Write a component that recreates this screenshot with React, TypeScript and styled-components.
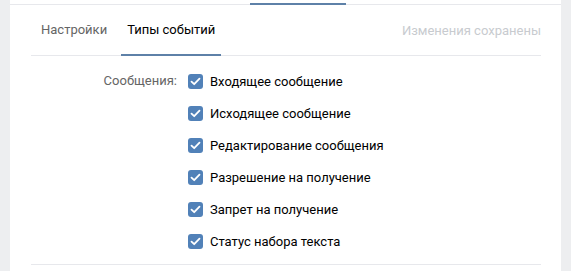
import React from 'react'
import styled, { createGlobalStyle } from 'styled-components'

const Global = createGlobalStyle`
body {
  margin: 0;
  background: #edeef0;
  font-family: Roboto, "Open Sans", sans-serif;
  -webkit-font-smoothing: antialiased;
}
`

const events = [
  'Входящее сообщение',
  'Исходящее сообщение',
  'Редактирование сообщения',
  'Разрешение на получение',
  'Запрет на получение',
  'Статус набора текста',
]

const App = () => {
  return (
    <Page>
      <Global />
      <TopStrip>
        <TopIndicator />
      </TopStrip>
      <Panel>
        <Tabs>
          <Tab>Настройки</Tab>
          <Tab active>Типы событий</Tab>
          <Saved>Изменения сохранены</Saved>
        </Tabs>
        <Form>
          <Label>Сообщения:</Label>
          <List>
            {events.map((e) => (
              <Row key={e}>
                <Box>
                  <svg width="11" height="9" viewBox="0 0 11 9">
                    <path d="M1.5 4.6 L4.2 7.2 L9.5 1.6" fill="none" stroke="#fff" strokeWidth="1.8" strokeLinecap="round" strokeLinejoin="round" />
                  </svg>
                </Box>
                <Text>{e}</Text>
              </Row>
            ))}
          </List>
        </Form>
      </Panel>
    </Page>
  )
}

export default App

const Page = styled.div`
width: 551px;
margin-left: 10px;
`

const TopStrip = styled.div`
height: 4px;
display: flex;
background: #fff;
border-bottom: 1px solid #e7e8ec;
`

const TopIndicator = styled.div`
margin-left: 240px;
width: 96px;
height: 2px;
align-self: flex-end;
margin-bottom: -1px;
background: #5e81a8;
`

const Panel = styled.div`
background: #fff;
padding: 0 20px 0 21px;
height: 266px;
`

const Tabs = styled.div`
display: flex;
align-items: stretch;
height: 50px;
border-bottom: 1px solid #e7e8ec;
padding-left: 4px;
gap: 8px;
`

const Tab = styled.div<{ active?: boolean }>`
display: flex;
align-items: center;
padding: 0 6px;
font-size: 13px;
color: ${({ active }) => (active ? '#000' : '#656565')};
border-bottom: 2px solid ${({ active }) => (active ? '#5e81a8' : 'transparent')};
margin-bottom: -1px;
`

const Saved = styled.div`
margin-left: auto;
display: flex;
align-items: center;
font-size: 13px;
color: #c8cbcf;
`

const Form = styled.div`
display: flex;
padding: 9px 0 7px;
border-bottom: 1px solid #e7e8ec;
`

const Label = styled.div`
width: 146px;
text-align: right;
font-size: 13px;
color: #656565;
line-height: 32px;
margin-right: 11px;
`

const List = styled.div`
display: flex;
flex-direction: column;
`

const Row = styled.div`
display: flex;
align-items: center;
height: 32px;
`

const Box = styled.div`
width: 15px;
height: 15px;
border-radius: 3px;
background: #5181b8;
display: flex;
align-items: center;
justify-content: center;
margin-right: 7px;
`

const Text = styled.div`
font-size: 13px;
color: #000;
`
